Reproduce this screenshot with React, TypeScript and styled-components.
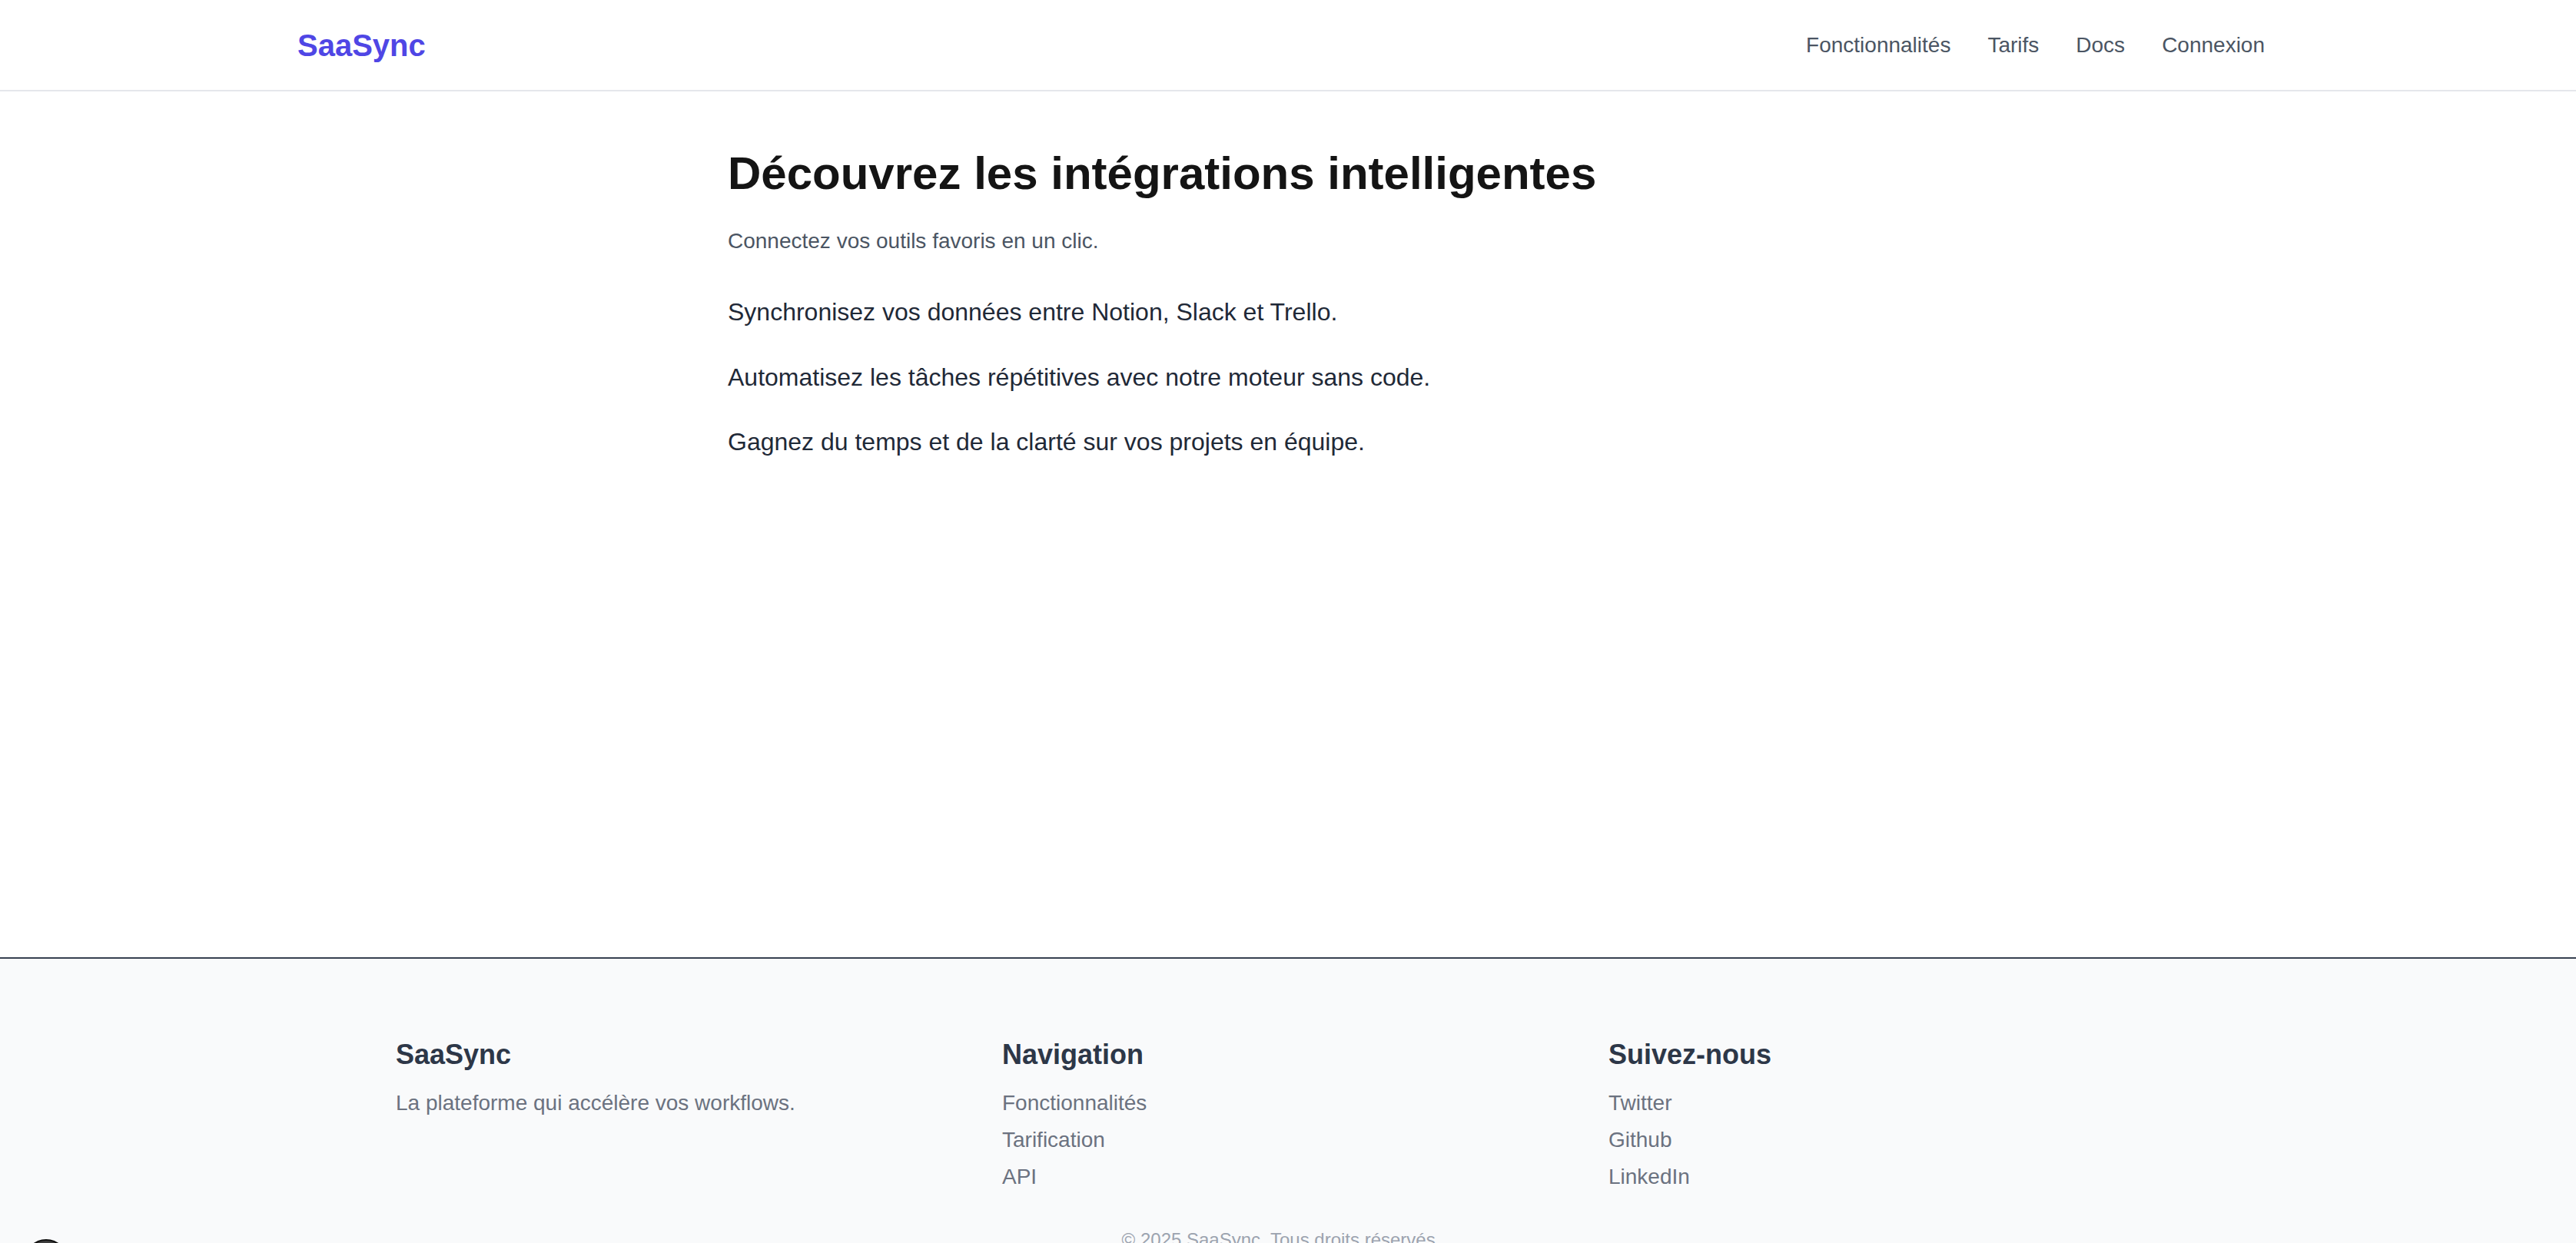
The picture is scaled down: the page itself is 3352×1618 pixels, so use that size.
import React from "react";
import styled, { createGlobalStyle } from "styled-components";

const GlobalStyle = createGlobalStyle`
  html, body {
    margin: 0;
    padding: 0;
    background: #ffffff;
    font-family: "Liberation Sans", Arial, sans-serif;
  }
  * { box-sizing: border-box; }
  #root { position: relative; }
`;

const Page = styled.div`
  display: flex;
  flex-direction: column;
  position: relative;
`;

const Header = styled.header`
  height: 119px;
  border-bottom: 2px solid #e5e7eb;
  background: #ffffff;
`;

const HeaderInner = styled.div`
  width: 2578px;
  margin: 0 auto;
  height: 100%;
  display: flex;
  align-items: center;
  justify-content: space-between;
`;

const Logo = styled.a`
  font-size: 40px;
  font-weight: 700;
  color: #4f46e5;
  text-decoration: none;
  line-height: 1;
`;

const Nav = styled.nav`
  display: flex;
  align-items: center;
  gap: 16px;
  margin-right: 2px;
`;

const NavLink = styled.a`
  font-size: 28px;
  color: #4b5563;
  text-decoration: none;
  padding: 8px 16px;
  line-height: 1.2;
`;

const Main = styled.main`
  height: 1127px;
`;

const Content = styled.section`
  width: 1458px;
  margin: 0 auto;
  padding-top: 71px;
`;

const Title = styled.h1`
  margin: 0;
  font-size: 60px;
  line-height: 72px;
  font-weight: 700;
  color: #141414;
`;

const Subtitle = styled.p`
  margin: 31px 0 0;
  font-size: 28px;
  line-height: 42px;
  color: #4b5563;
`;

const FeatureList = styled.div`
  margin-top: 47px;
  display: flex;
  flex-direction: column;
  gap: 36.5px;
`;

const Feature = styled.p`
  margin: 0;
  font-size: 32px;
  line-height: 48px;
  color: #1f2937;
`;

const Footer = styled.footer`
  border-top: 2px solid #374151;
  background: #f9fafb;
  padding: 103px 0 60px;
`;

const FooterGrid = styled.div`
  width: 2322px;
  margin: 0 auto;
  display: grid;
  grid-template-columns: repeat(3, 1fr);
  gap: 45px;
`;

const FooterCol = styled.div`
  display: flex;
  flex-direction: column;
`;

const FooterTitle = styled.h3`
  margin: 0 0 18px;
  font-size: 36px;
  line-height: 43px;
  font-weight: 700;
  color: #2d3748;
`;

const FooterText = styled.p`
  margin: 0;
  font-size: 28px;
  line-height: 48px;
  color: #6b7280;
`;

const FooterLink = styled.a`
  font-size: 28px;
  line-height: 48px;
  color: #6b7280;
  text-decoration: none;
`;

const Copyright = styled.p`
  margin: 40px 0 0;
  padding-right: 18px;
  text-align: center;
  font-size: 24px;
  line-height: 36px;
  color: #9ca3af;
`;

const DevBadge = styled.div`
  position: absolute;
  top: 1613px;
  left: 32px;
  width: 56px;
  height: 56px;
  border-radius: 50%;
  background: #3d3d3d;
  border: 2px solid #111111;
`;

const navItems = ["Fonctionnalités", "Tarifs", "Docs", "Connexion"];
const features = [
  "Synchronisez vos données entre Notion, Slack et Trello.",
  "Automatisez les tâches répétitives avec notre moteur sans code.",
  "Gagnez du temps et de la clarté sur vos projets en équipe.",
];

export default function App() {
  return (
    <>
      <GlobalStyle />
      <Page>
        <Header>
          <HeaderInner>
            <Logo href="#">SaaSync</Logo>
            <Nav>
              {navItems.map((n) => (
                <NavLink key={n} href="#">
                  {n}
                </NavLink>
              ))}
            </Nav>
          </HeaderInner>
        </Header>
        <Main>
          <Content>
            <Title>Découvrez les intégrations intelligentes</Title>
            <Subtitle>Connectez vos outils favoris en un clic.</Subtitle>
            <FeatureList>
              {features.map((f) => (
                <Feature key={f}>{f}</Feature>
              ))}
            </FeatureList>
          </Content>
        </Main>
        <Footer>
          <FooterGrid>
            <FooterCol>
              <FooterTitle>SaaSync</FooterTitle>
              <FooterText>La plateforme qui accélère vos workflows.</FooterText>
            </FooterCol>
            <FooterCol>
              <FooterTitle>Navigation</FooterTitle>
              <FooterLink href="#">Fonctionnalités</FooterLink>
              <FooterLink href="#">Tarification</FooterLink>
              <FooterLink href="#">API</FooterLink>
            </FooterCol>
            <FooterCol>
              <FooterTitle>Suivez-nous</FooterTitle>
              <FooterLink href="#">Twitter</FooterLink>
              <FooterLink href="#">Github</FooterLink>
              <FooterLink href="#">LinkedIn</FooterLink>
            </FooterCol>
          </FooterGrid>
          <Copyright>© 2025 SaaSync. Tous droits réservés.</Copyright>
        </Footer>
        <DevBadge />
      </Page>
    </>
  );
}
